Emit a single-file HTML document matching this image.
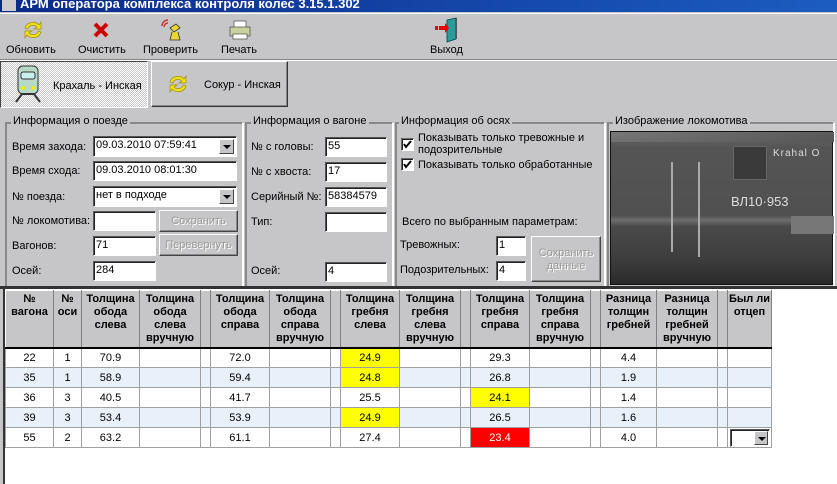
<!DOCTYPE html>
<html><head><meta charset="utf-8"><style>
*{box-sizing:border-box;margin:0;padding:0}
body{width:837px;height:484px;overflow:hidden;background:#c6c5c7;font-family:"Liberation Sans","DejaVu Sans",sans-serif;font-size:11px;color:#000;position:relative}
.a{position:absolute}
.title{left:0;top:0;width:837px;height:12px;background:linear-gradient(90deg,#0a2a8a,#1c5cc0);color:#fff;font-weight:bold;font-size:13px;line-height:7px;overflow:hidden;padding-left:20px}
.tb{text-align:center}
.gb{border:1px solid #fff;box-shadow:inset 1px 1px 0 #888, 1px 1px 0 #fff;border-color:#888 #fff #fff #888}
.leg{background:#c6c5c7;padding:0 2px;top:-8px;left:5px;white-space:nowrap}
.fld{background:#fff;border:1px solid;border-color:#555 #fff #fff #555;box-shadow:inset 1px 1px 0 #222;padding:2px 0 0 2px;font-size:11px;white-space:nowrap;overflow:hidden}
.dd{position:absolute;right:2px;top:2px;width:15px;height:15px;background:#c6c5c7;border:1px solid;border-color:#fff #444 #444 #fff}
.dd:after{content:"";position:absolute;left:3px;top:5px;border:4px solid transparent;border-top:4px solid #000}
.btn{background:#c6c5c7;border:1px solid;border-color:#fff #444 #444 #fff;box-shadow:inset -1px -1px 0 #888;color:#999;text-align:center;text-shadow:1px 1px 0 #fff}
.lbl{white-space:nowrap}
.cb{width:13px;height:13px;background:#fff;border:1px solid;border-color:#666 #fff #fff #666;box-shadow:inset 1px 1px 0 #222}
table{border-collapse:collapse;position:absolute;left:5px;top:290px;table-layout:fixed}
td,th{border:1px solid #a0a0a0;text-align:center;height:20px;padding:0;font-size:11px;overflow:hidden}
th{background:#c6c5c7;font-weight:bold;vertical-align:top;height:57px;line-height:13px;padding-top:2px;border-color:#fff #808080 #000 #fff;border-bottom:2px solid #000}
tr.b td{background:#e8f0fa}
.y{background:#ffff00!important}.r{background:#ff0000!important;color:#fff}
</style></head><body>
<div class="a title">АРМ оператора комплекса контроля колес 3.15.1.302</div>
<div class="a" style="left:2px;top:0;width:14px;height:11px;background:#ccc"></div>
<div class="a" style="left:0;top:13px;width:837px;height:1px;background:#fff"></div>
<svg class="a" style="left:22px;top:20px" width="22" height="20"><path d="M3 8a8 7 0 0 1 14-3l2-3v7h-7l3-2a5 4 0 0 0-9 2z M19 12a8 7 0 0 1-14 3l-2 3v-7h7l-3 2a5 4 0 0 0 9-2z" fill="#f0e020" stroke="#a09000" stroke-width=".7"/></svg>
<div class="a tb" style="left:6px;top:44px">Обновить</div>
<svg class="a" style="left:93px;top:22px" width="16" height="16"><path d="M2 2L14 14M14 2L2 14" stroke="#c00" stroke-width="4"/></svg>
<div class="a tb" style="left:78px;top:44px">Очистить</div>
<svg class="a" style="left:160px;top:18px" width="24" height="24"><path d="M2 8a6 6 0 0 1 6-6M4 9a4 4 0 0 1 4-4" stroke="#c33" fill="none" stroke-width="1.5"/><path d="M10 10l6-4 4 4-6 4z M12 14l-2 8h10l-2-8" fill="#e8d830" stroke="#333" stroke-width=".8"/></svg>
<div class="a tb" style="left:143px;top:44px">Проверить</div>
<svg class="a" style="left:229px;top:20px" width="22" height="20"><rect x="5" y="1" width="12" height="7" fill="#fff" stroke="#333" stroke-width=".6"/><rect x="1" y="7" width="20" height="9" fill="#c8d0a0" stroke="#333" stroke-width=".6"/><rect x="4" y="14" width="14" height="5" fill="#fff" stroke="#333" stroke-width=".6"/></svg>
<div class="a tb" style="left:221px;top:44px">Печать</div>
<svg class="a" style="left:433px;top:17px" width="26" height="26"><path d="M14 3l9-2v21l-9 3z" fill="#2a9a9a" stroke="#044" stroke-width=".8"/><path d="M23 1h1v21h-1" fill="#555"/><path d="M2 9h3v4H2zM6 9h6V6l4 5-4 5v-3H6z" fill="#e00"/></svg>
<div class="a tb" style="left:430px;top:44px">Выход</div>
<div class="a" style="left:0;top:59px;width:837px;height:1px;background:#888"></div>
<div class="a" style="left:0;top:60px;width:837px;height:1px;background:#fff"></div>
<div class="a" style="left:0;top:61px;width:148px;height:47px;background:repeating-conic-gradient(#fff 0 25%,#c6c5c7 0 50%) 0 0/2px 2px;border:1px solid;border-color:#444 #fff #fff #444"></div>
<svg class="a" style="left:12px;top:64px" width="32" height="40"><rect x="6" y="2" width="20" height="28" rx="5" fill="#b8d8c8" stroke="#333"/><rect x="9" y="8" width="14" height="7" rx="2" fill="#c8f0f0" stroke="#333"/><circle cx="11" cy="24" r="2" fill="#ee0"/><circle cx="21" cy="24" r="2" fill="#ee0"/><path d="M4 38l6-8h12l6 8" stroke="#333" fill="none" stroke-width="2"/></svg>
<div class="a" style="left:53px;top:80px">Крахаль - Инская</div>
<div class="a" style="left:151px;top:61px;width:137px;height:46px;border:1px solid;border-color:#fff #333 #333 #fff;box-shadow:inset -1px -1px 0 #888"></div>
<svg class="a" style="left:167px;top:74px" width="22" height="20"><path d="M3 8a8 7 0 0 1 14-3l2-3v7h-7l3-2a5 4 0 0 0-9 2z M19 12a8 7 0 0 1-14 3l-2 3v-7h7l-3 2a5 4 0 0 0 9-2z" fill="#f0e020" stroke="#a09000" stroke-width=".7"/></svg>
<div class="a" style="left:204px;top:79px">Сокур - Инская</div>
<div class="a gb" style="left:5px;top:122px;width:238px;height:165px"><div class="a leg">Информация о поезде</div></div>
<div class="a gb" style="left:245px;top:122px;width:148px;height:165px"><div class="a leg">Информация о вагоне</div></div>
<div class="a gb" style="left:395px;top:122px;width:210px;height:165px"><div class="a leg" style="left:3px">Информация об осях</div></div>
<div class="a gb" style="left:607px;top:122px;width:227px;height:165px"><div class="a leg" style="left:5px">Изображение локомотива</div></div>
<div class="a lbl" style="left:12px;top:141px">Время захода:</div>
<div class="a fld" style="left:93px;top:136px;width:144px;height:21px">09.03.2010 07:59:41<div class="dd"></div></div>
<div class="a lbl" style="left:12px;top:165px">Время схода:</div>
<div class="a fld" style="left:93px;top:161px;width:144px;height:20px">09.03.2010 08:01:30</div>
<div class="a lbl" style="left:12px;top:191px">№ поезда:</div>
<div class="a fld" style="left:93px;top:186px;width:144px;height:21px">нет в подходе<div class="dd"></div></div>
<div class="a lbl" style="left:12px;top:215px">№ локомотива:</div>
<div class="a fld" style="left:93px;top:211px;width:63px;height:20px"></div>
<div class="a btn" style="left:159px;top:210px;width:79px;height:22px;line-height:20px">Сохранить</div>
<div class="a lbl" style="left:12px;top:240px">Вагонов:</div>
<div class="a fld" style="left:93px;top:236px;width:63px;height:20px">71</div>
<div class="a btn" style="left:159px;top:234px;width:79px;height:22px;line-height:20px">Перевернуть</div>
<div class="a lbl" style="left:12px;top:265px">Осей:</div>
<div class="a fld" style="left:93px;top:261px;width:63px;height:20px">284</div>
<div class="a lbl" style="left:251px;top:141px">№ с головы:</div>
<div class="a fld" style="left:325px;top:137px;width:62px;height:20px">55</div>
<div class="a lbl" style="left:251px;top:166px">№ с хвоста:</div>
<div class="a fld" style="left:325px;top:162px;width:62px;height:20px">17</div>
<div class="a lbl" style="left:251px;top:191px">Серийный №:</div>
<div class="a fld" style="left:325px;top:187px;width:62px;height:20px">58384579</div>
<div class="a lbl" style="left:251px;top:216px">Тип:</div>
<div class="a fld" style="left:325px;top:212px;width:62px;height:20px"></div>
<div class="a lbl" style="left:251px;top:265px">Осей:</div>
<div class="a fld" style="left:325px;top:262px;width:62px;height:20px">4</div>
<div class="a cb" style="left:401px;top:138px"><svg width="11" height="11" style="display:block"><path d="M2 5l2 3 5-6" stroke="#000" stroke-width="2" fill="none"/></svg></div>
<div class="a lbl" style="left:418px;top:132px;line-height:12px">Показывать только тревожные и<br>подозрительные</div>
<div class="a cb" style="left:401px;top:158px"><svg width="11" height="11" style="display:block"><path d="M2 5l2 3 5-6" stroke="#000" stroke-width="2" fill="none"/></svg></div>
<div class="a lbl" style="left:418px;top:159px">Показывать только обработанные</div>
<div class="a lbl" style="left:402px;top:216px">Всего по выбранным параметрам:</div>
<div class="a lbl" style="left:400px;top:239px">Тревожных:</div>
<div class="a fld" style="left:496px;top:236px;width:30px;height:20px">1</div>
<div class="a lbl" style="left:400px;top:264px">Подозрительных:</div>
<div class="a fld" style="left:496px;top:261px;width:30px;height:20px">4</div>
<div class="a btn" style="left:531px;top:236px;width:70px;height:46px;padding-top:10px;line-height:13px">Сохранить<br>данные</div>
<div class="a" style="left:610px;top:131px;width:223px;height:154px;background:linear-gradient(180deg,#6a6a6a 0%,#555 10%,#505050 55%,#6e6e6e 58%,#4a4a4a 62%,#3c3c3c 85%,#2a2a2a 100%);border:1px solid #111">
<div class="a" style="left:0;top:0;width:223px;height:10px;background:linear-gradient(170deg,#777,#555)"></div>
<div class="a" style="left:122px;top:14px;width:34px;height:34px;background:#3a3a3a;border:1px solid #666"></div>
<div class="a" style="left:60px;top:30px;width:2px;height:90px;background:#aaa"></div>
<div class="a" style="left:87px;top:30px;width:2px;height:95px;background:#aaa"></div>
<div class="a" style="left:180px;top:84px;width:43px;height:18px;background:#777"></div>
<div class="a" style="left:120px;top:62px;color:#ddd;font-size:13px">ВЛ10·953</div>
<div class="a" style="left:162px;top:16px;color:#ddd;font-size:10px;letter-spacing:1px">Krahal O</div>
</div>
<div class="a" style="left:0;top:286px;width:837px;height:3px;background:#333"></div>
<div class="a" style="left:3px;top:289px;width:834px;height:195px;background:#fff;border-left:2px solid #333"></div>
<table>
<colgroup><col style="width:48px"><col style="width:28px"><col style="width:58px"><col style="width:61px"><col style="width:10px"><col style="width:59px"><col style="width:61px"><col style="width:10px"><col style="width:59px"><col style="width:61px"><col style="width:10px"><col style="width:59px"><col style="width:61px"><col style="width:10px"><col style="width:56px"><col style="width:61px"><col style="width:10px"><col style="width:44px"></colgroup>
<tr><th>№<br>вагона</th><th>№<br>оси</th><th>Толщина<br>обода<br>слева</th><th>Толщина<br>обода<br>слева<br>вручную</th><th></th><th>Толщина<br>обода<br>справа</th><th>Толщина<br>обода<br>справа<br>вручную</th><th></th><th>Толщина<br>гребня<br>слева</th><th>Толщина<br>гребня<br>слева<br>вручную</th><th></th><th>Толщина<br>гребня<br>справа</th><th>Толщина<br>гребня<br>справа<br>вручную</th><th></th><th>Разница<br>толщин<br>гребней</th><th>Разница<br>толщин<br>гребней<br>вручную</th><th></th><th>Был ли<br>отцеп</th></tr>
<tr><td>22</td><td>1</td><td>70.9</td><td></td><td></td><td>72.0</td><td></td><td></td><td class="y">24.9</td><td></td><td></td><td>29.3</td><td></td><td></td><td>4.4</td><td></td><td></td><td></td></tr>
<tr class="b"><td>35</td><td>1</td><td>58.9</td><td></td><td></td><td>59.4</td><td></td><td></td><td class="y">24.8</td><td></td><td></td><td>26.8</td><td></td><td></td><td>1.9</td><td></td><td></td><td></td></tr>
<tr><td>36</td><td>3</td><td>40.5</td><td></td><td></td><td>41.7</td><td></td><td></td><td>25.5</td><td></td><td></td><td class="y">24.1</td><td></td><td></td><td>1.4</td><td></td><td></td><td></td></tr>
<tr class="b"><td>39</td><td>3</td><td>53.4</td><td></td><td></td><td>53.9</td><td></td><td></td><td class="y">24.9</td><td></td><td></td><td>26.5</td><td></td><td></td><td>1.6</td><td></td><td></td><td></td></tr>
<tr><td>55</td><td>2</td><td>63.2</td><td></td><td></td><td>61.1</td><td></td><td></td><td>27.4</td><td></td><td></td><td class="r">23.4</td><td></td><td></td><td>4.0</td><td></td><td></td><td style="position:relative"><div class="fld" style="position:absolute;left:2px;top:1px;width:40px;height:18px;padding:0"><div class="dd" style="top:1px;right:1px;width:14px;height:14px"></div></div></td></tr>
</table>
</body></html>
